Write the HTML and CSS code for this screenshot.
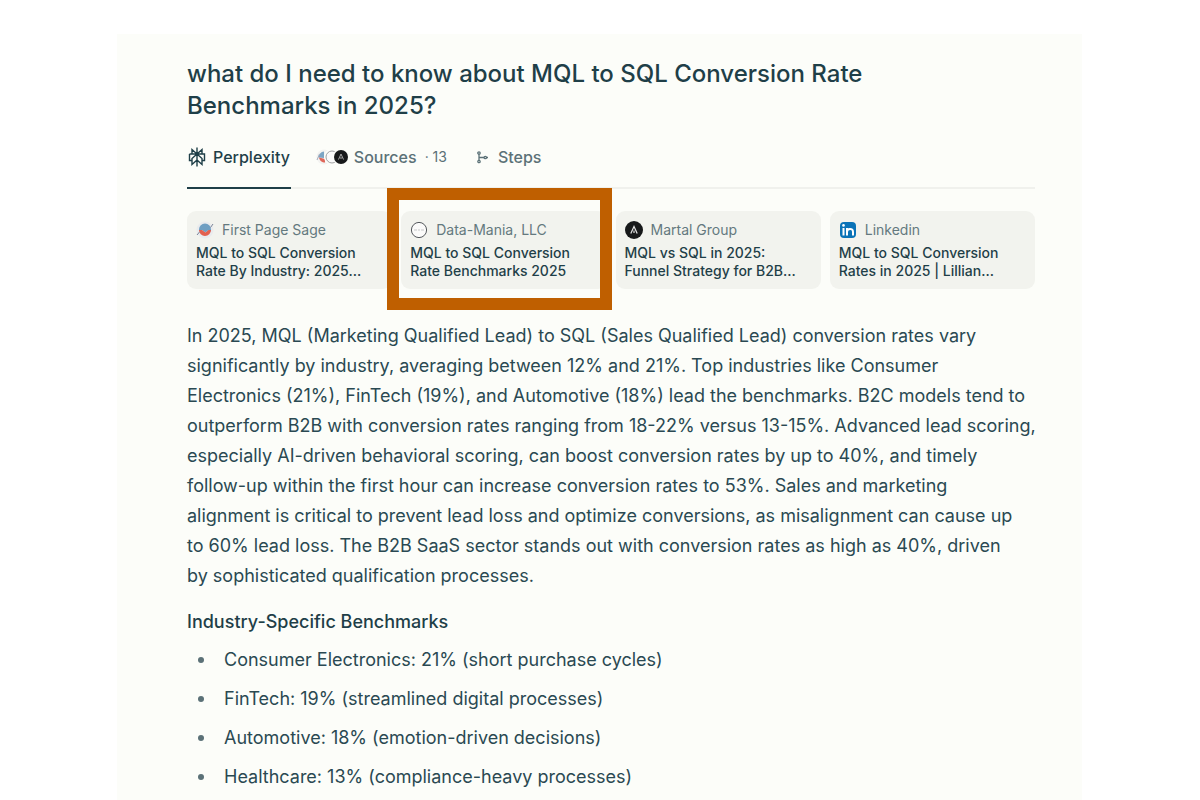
FILE: index.html
```html
<!DOCTYPE html>
<html lang="en">
<head>
<meta charset="utf-8">
<meta name="viewport" content="width=device-width, initial-scale=1">
<title>MQL to SQL Conversion Rate Benchmarks</title>
<link rel="stylesheet" href="styles.css">
</head>
<body>
<main class="panel">
  <h1 class="question">what do I need to know about MQL to SQL Conversion Rate<br>Benchmarks in 2025?</h1>

  <nav class="tabs" aria-label="Answer views">
    <button class="tab tab-active" type="button">
      <svg class="tab-icon" viewBox="0 0 18 20" aria-hidden="true">
        <g fill="none" stroke="currentColor" stroke-width="1.4" stroke-linejoin="miter">
          <path d="M9 .5v19M9 7L4 2.500V7M9 7l5-4.500V7M1.500 7h15v6.500H14M1.500 7v6.500H4M9 7L4 11.500v6L9 13M9 7l5 4.500v6L9 13"/>
        </g>
      </svg>
      <span>Perplexity</span>
    </button>
    <button class="tab tab-sources" type="button">
      <svg class="stack-icon" viewBox="0 0 34 16" aria-hidden="true">
        <circle cx="9" cy="8" r="7.500" fill="#f3f3f1"/>
        <path d="M9 2.500a6 6 0 0 0-5.500 6L9 9z" fill="#7ca5c4"/>
        <path d="M4 8.500L10 10v3.500C7 13.500 4.500 11.500 4 8.500z" fill="#df6659"/>
        <path d="M2 11L4.500 5" stroke="#a3adc0" stroke-width="1"/>
        <circle cx="17" cy="8" r="8" fill="#fcfdf9"/>
        <circle cx="17" cy="8" r="6" fill="#fafafa" stroke="#a0a1a3" stroke-width="1"/>
        <circle cx="26" cy="8" r="8" fill="#fcfdf9"/>
        <circle cx="26" cy="8" r="7" fill="#17191a"/>
        <path d="M23.500 10.500L26 5l2.500 5.500M26 8v2" fill="none" stroke="#a9a9a9" stroke-width="1"/>
      </svg>
      <span>Sources</span>
      <span class="count">· 13</span>
    </button>
    <button class="tab tab-steps" type="button">
      <svg class="steps-icon" viewBox="0 0 14 14" aria-hidden="true">
        <g fill="none" stroke="currentColor" stroke-width="1.300">
          <circle cx="3" cy="3" r="1.200"/><circle cx="3" cy="11.500" r="1.200"/><circle cx="9.300" cy="7.500" r="1.200"/>
          <path d="M3 4v6.500M3 7.500h5M10.500 7.500H12"/>
        </g>
      </svg>
      <span>Steps</span>
    </button>
  </nav>

  <section class="sources" aria-label="Sources">
    <a class="card" href="#">
      <span class="site">
        <svg class="logo" viewBox="0 0 18 18" aria-hidden="true">
          <circle cx="9" cy="9" r="8.500" fill="#e9ebee"/>
          <path d="M3 8.500a6 6 0 0 1 12 0v2L12.500 9 9.500 11.500 6 9 3 10.500z" fill="#6f9fc2"/>
          <path d="M3 9l3 0 3.500 2.500L12.500 9H15a6 6 0 0 1-12 0z" fill="#e2604f"/>
          <path d="M1 14l2.500-3M14.500 6.500L17 3" stroke="#7b8498" stroke-width="1"/>
        </svg>
        <span>First Page Sage</span>
      </span>
      <span class="card-title">MQL to SQL Conversion<br>Rate By Industry: 2025…</span>
    </a>
    <a class="card card-marked" href="#">
      <span class="site">
        <svg class="logo" viewBox="0 0 18 18" aria-hidden="true">
          <circle cx="9" cy="9" r="7.600" fill="#fbfbfa" stroke="#55595d" stroke-width="1"/>
          <path d="M4 9h3M8 9h2M11 9h3" stroke="#c8c9ca" stroke-width="1"/>
        </svg>
        <span>Data-Mania, LLC</span>
      </span>
      <span class="card-title">MQL to SQL Conversion<br>Rate Benchmarks 2025</span>
    </a>
    <a class="card" href="#">
      <span class="site">
        <svg class="logo" viewBox="0 0 18 18" aria-hidden="true">
          <circle cx="9" cy="9" r="9" fill="#17191a"/>
          <path d="M5.800 12.500L9 5.500l3.200 7M9 9.500v2.500" fill="none" stroke="#e4e4e4" stroke-width="1.200"/>
        </svg>
        <span>Martal Group</span>
      </span>
      <span class="card-title">MQL vs SQL in 2025:<br>Funnel Strategy for B2B…</span>
    </a>
    <a class="card" href="#">
      <span class="site">
        <svg class="logo" viewBox="0 0 18 18" aria-hidden="true">
          <rect x="1" y="1" width="16" height="16" rx="4" fill="#0a73b7"/>
          <path d="M4.500 7V14.500M8 14.500V7M8 11c0-3.500 6-4.500 6 0v3.500" fill="none" stroke="#fff" stroke-width="2"/>
          <circle cx="4.500" cy="4.400" r="1.300" fill="#fff"/>
        </svg>
        <span>Linkedin</span>
      </span>
      <span class="card-title">MQL to SQL Conversion<br>Rates in 2025 | Lillian…</span>
    </a>
  </section>

  <article class="answer">
    <p class="summary">In 2025, MQL (Marketing Qualified Lead) to SQL (Sales Qualified Lead) conversion rates vary<br>significantly by industry, averaging between 12% and 21%. Top industries like Consumer<br>Electronics (21%), FinTech (19%), and Automotive (18%) lead the benchmarks. B2C models tend to<br>outperform B2B with conversion rates ranging from 18-22% versus 13-15%. Advanced lead scoring,<br>especially AI-driven behavioral scoring, can boost conversion rates by up to 40%, and timely<br>follow-up within the first hour can increase conversion rates to 53%. Sales and marketing<br>alignment is critical to prevent lead loss and optimize conversions, as misalignment can cause up<br>to 60% lead loss. The B2B SaaS sector stands out with conversion rates as high as 40%, driven<br>by sophisticated qualification processes.</p>
    <h2 class="subhead">Industry-Specific Benchmarks</h2>
    <ul class="benchmarks">
      <li>Consumer Electronics: 21% (short purchase cycles)</li>
      <li>FinTech: 19% (streamlined digital processes)</li>
      <li>Automotive: 18% (emotion-driven decisions)</li>
      <li>Healthcare: 13% (compliance-heavy processes)</li>
    </ul>
  </article>
</main>
</body>
</html>
```
FILE: styles.css
```css
* { box-sizing: border-box; }

body {
  margin: 0;
  padding: 34px 118px 0 117px;
  background: #fff;
  color: #1f3f48;
  font-family: Inter, "Liberation Sans", sans-serif;
}

.panel {
  min-height: calc(100vh - 34px);
  padding: 24px 47px 0 70px;
  background: #fcfdf9;
}

.question {
  margin: 0;
  font-size: 24px;
  line-height: 32px;
  font-weight: 500;
}

.tabs {
  display: flex;
  gap: 23px;
  margin-top: 16px;
  border-bottom: 2px solid #f0f1ed;
}

.tab {
  display: flex;
  align-items: center;
  height: 51px;
  margin-bottom: -2px;
  padding: 0 1px 12px;
  border: 0;
  border-bottom: 2px solid transparent;
  background: none;
  color: #5b7177;
  font: 500 16px/24px Inter, "Liberation Sans", sans-serif;
  white-space: nowrap;
}

.tab-active {
  border-bottom-color: #1f3f48;
  color: #1f3f48;
}

.tab-icon { width: 18px; height: 20px; margin-right: 7px; }
.stack-icon { width: 34px; height: 16px; margin-right: 5px; }
.steps-icon { width: 14px; height: 14px; margin-right: 8px; }
.tab-steps { margin-left: 4px; }
.count { margin-left: 8px; font-size: 14px; font-weight: 400; }

.sources {
  display: grid;
  grid-template-columns: repeat(4, 1fr);
  gap: 9px;
  margin-top: 22px;
}

.card {
  position: relative;
  padding: 10px 9px 9px;
  border-radius: 9px;
  background: #f2f3ee;
  color: #1f3f48;
  font-size: 14px;
  line-height: 18px;
  text-decoration: none;
  white-space: nowrap;
}

.card-marked::after {
  content: "";
  position: absolute;
  inset: -23px -5px -21px -14px;
  border: 12px solid #bf5f00;
}

.site {
  display: flex;
  align-items: center;
  gap: 8px;
  margin-bottom: 5px;
  color: #64797e;
}

.logo { width: 18px; height: 18px; }

.card-title { display: block; font-weight: 500; }

.answer {
  color: #2a4952;
  font-size: 18px;
  line-height: 30px;
}

.summary {
  margin: 32px 0 0;
  white-space: nowrap;
}

.subhead {
  margin: 15px 0 0;
  color: #1f3f48;
  font-size: 18px;
  line-height: 32px;
  font-weight: 500;
}

.benchmarks {
  display: grid;
  gap: 9px;
  margin: 7px 0 0;
  padding: 0 0 0 11px;
  list-style: none;
}

.benchmarks li {
  display: flex;
  align-items: center;
  gap: 20px;
}

.benchmarks li::before {
  content: "";
  width: 6px;
  height: 6px;
  border-radius: 50%;
  background: #5b7177;
}
```
